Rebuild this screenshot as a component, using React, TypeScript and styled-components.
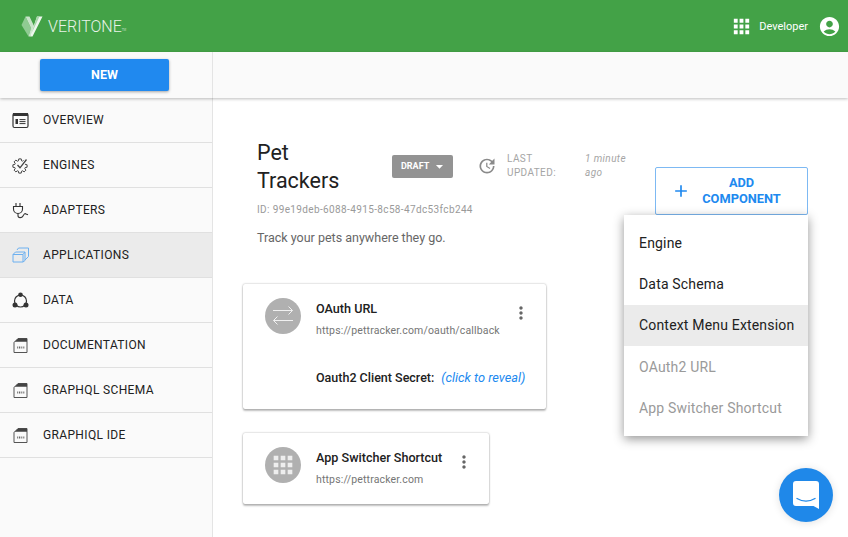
import styled, { createGlobalStyle } from "styled-components";
import { MdAccountCircle, MdAdd, MdApps, MdArrowDropDown, MdMoreVert, MdUpdate } from "react-icons/md";

const GlobalStyle = createGlobalStyle`
  html, body {
    margin: 0;
    height: 100%;
    overflow: hidden;
    background: #fff;
    font-family: Roboto, "Liberation Sans", sans-serif;
    color: #212121;
  }
`;

const Page = styled.div`
  position: relative;
  width: 848px;
  height: 537px;
  overflow: hidden;
`;

const TopBar = styled.header`
  display: flex;
  align-items: center;
  justify-content: space-between;
  height: 52px;
  padding: 0 7px 0 21px;
  background: #43a247;
  color: #fff;
`;

const Brand = styled.div`
  display: flex;
  align-items: center;
  gap: 5px;
  font-size: 16px;
  font-weight: 300;
  color: #e8f3e8;
`;

const Tm = styled.span`
  align-self: flex-end;
  margin: 0 0 5px -5px;
  font-size: 3px;
`;

const UserArea = styled.div`
  display: flex;
  align-items: center;
  font-size: 11px;
`;

const UserName = styled.span`
  margin: 0 10px 0 6px;
`;

const SubBar = styled.div`
  position: relative;
  z-index: 1;
  display: flex;
  height: 46px;
  background: #fafafa;
  box-shadow: 0 1px 3px rgba(0, 0, 0, 0.26);
`;

const SubBarLeft = styled.div`
  box-sizing: border-box;
  width: 213px;
  padding: 7px 0 0 40px;
  border-right: 1px solid #e4e4e4;
`;

const NewButton = styled.button`
  width: 129px;
  height: 32px;
  padding: 0 0 1px;
  border: 0;
  border-radius: 2px;
  background: #2089ef;
  color: #fff;
  font: 700 12.5px Roboto, sans-serif;
  box-shadow: 0 1px 3px rgba(0, 0, 0, 0.35);
`;

const Body = styled.div`
  display: flex;
  height: 439px;
`;

const Sidebar = styled.nav`
  box-sizing: border-box;
  flex: none;
  width: 213px;
  background: #fafafa;
  border-right: 1px solid #e4e4e4;
`;

const NavItem = styled.div<{ $active?: boolean }>`
  display: flex;
  align-items: center;
  box-sizing: border-box;
  height: 45px;
  padding-left: 12px;
  border-bottom: 1px solid #e0e0e0;
  background: ${(p) => (p.$active ? "#ebebeb" : "transparent")};
  font-size: 12px;
  letter-spacing: 0.35px;
  color: #212121;
`;

const NavIcon = styled.svg`
  flex: none;
  width: 17px;
  height: 17px;
  margin-right: 14px;
`;

const Main = styled.main`
  flex: 1;
  padding: 40px 40px 0 30px;
`;

const Head = styled.div`
  display: flex;
  align-items: flex-start;
  height: 146px;
`;

const HeadInfo = styled.div`
  width: 398px;
  padding-left: 14px;
`;

const TitleRow = styled.div`
  display: flex;
  align-items: center;
`;

const Title = styled.h1`
  width: 135px;
  margin: 1px 0 -1px;
  font-size: 21.5px;
  font-weight: 400;
  line-height: 28px;
  color: #212121;
`;

const DraftBadge = styled.div`
  display: flex;
  align-items: center;
  box-sizing: border-box;
  width: 61px;
  height: 23px;
  padding-left: 9px;
  border-radius: 2px;
  background: #939393;
  color: #fff;
  font-size: 9px;
  font-weight: 700;
`;

const DraftCaret = styled(MdArrowDropDown)`
  margin-left: 2px;
`;

const Updated = styled.div`
  display: flex;
  align-items: center;
  margin-left: 24px;
  color: #a5a5a5;
  font-size: 10px;
  line-height: 14px;
`;

const UpdatedLabel = styled.span`
  width: 78px;
  margin-left: 10px;
  letter-spacing: 0.4px;
`;

const UpdatedValue = styled.em`
  width: 48px;
  letter-spacing: 0.4px;
`;

const AppId = styled.div`
  margin-top: 10px;
  font-size: 10px;
  line-height: 12px;
  letter-spacing: 0.37px;
  color: #9a9a9a;
`;

const Description = styled.p`
  margin: 15px 0 0;
  font-size: 12.5px;
  line-height: 14px;
  color: #666;
`;

const AddButton = styled.button`
  display: flex;
  align-items: center;
  box-sizing: border-box;
  flex: none;
  width: 153px;
  height: 48px;
  margin-top: 29px;
  padding: 0 0 0 15px;
  border: 1px solid #7db9f3;
  border-radius: 2px;
  background: #fff;
  color: #2089ef;
  font: 700 12.8px/16px Roboto, sans-serif;
`;

const AddLabel = styled.span`
  flex: 1;
  padding-right: 15px;
  text-align: center;
`;

const Cards = styled.div`
  display: flex;
  flex-direction: column;
  align-items: flex-start;
  gap: 24px;
`;

const Card = styled.section<{ $width: number; $height: number }>`
  display: flex;
  align-items: flex-start;
  box-sizing: border-box;
  width: ${(p) => p.$width}px;
  height: ${(p) => p.$height}px;
  padding: 14px 16px 0 22px;
  border-radius: 2px;
  background: #fff;
  box-shadow: 0 0 2px rgba(0, 0, 0, 0.35), 0 2px 2px rgba(0, 0, 0, 0.24);
`;

const CircleIcon = styled.div`
  display: flex;
  align-items: center;
  justify-content: center;
  flex: none;
  width: 36px;
  height: 36px;
  margin-right: 15px;
  border-radius: 50%;
  background: #b0b0b0;
  color: #eee;
`;

const CardText = styled.div`
  flex: 1;
  min-width: 0;
`;

const CardTitle = styled.div`
  padding-top: 4px;
  font-size: 12.6px;
  font-weight: 500;
  line-height: 14px;
  color: #212121;
`;

const CardUrl = styled.div`
  margin-top: 9px;
  font-size: 10.5px;
  line-height: 12px;
  letter-spacing: 0.15px;
  color: #757575;
`;

const Secret = styled.div`
  margin-top: 34px;
  font-size: 12.5px;
  font-weight: 500;
  line-height: 14px;
  white-space: nowrap;
`;

const Reveal = styled.em`
  margin-left: 7px;
  font-size: 12.8px;
  font-weight: 400;
  color: #2089ef;
`;

const Kebab = styled(MdMoreVert)`
  flex: none;
  margin: 5px -1px 0 0;
  color: #666;
`;

const Menu = styled.div`
  position: absolute;
  top: 215px;
  left: 624px;
  z-index: 2;
  width: 184px;
  height: 221px;
  padding: 7.5px 0;
  box-sizing: border-box;
  background: #fff;
  box-shadow: 0 3px 10px rgba(0, 0, 0, 0.42);
`;

const MenuItem = styled.div<{ $disabled?: boolean; $hover?: boolean }>`
  display: flex;
  align-items: center;
  height: 41.2px;
  padding-left: 15px;
  font-size: 14px;
  letter-spacing: 0.18px;
  background: ${(p) => (p.$hover ? "#ebebeb" : "transparent")};
  color: ${(p) => (p.$disabled ? "#9a9a9a" : "#212121")};
`;

const ChatBubble = styled.div`
  position: absolute;
  top: 468px;
  left: 779px;
  z-index: 2;
  display: flex;
  align-items: center;
  justify-content: center;
  width: 54px;
  height: 54px;
  border-radius: 50%;
  background: #1f88e9;
  box-shadow: 0 1px 8px rgba(0, 0, 0, 0.12);
`;

// outline of an 8 tooth gear round (8, 9)
const gearPath = () => {
  const points: string[] = [];
  for (let i = 0; i < 8; i++) {
    const a = (i * Math.PI) / 4;
    [
      [-0.3, 5.4],
      [-0.17, 7.2],
      [0.17, 7.2],
      [0.3, 5.4],
    ].forEach(([offset, r]) => {
      const x = 8 + r * Math.cos(a + offset);
      const y = 9 + r * Math.sin(a + offset);
      points.push(`${x.toFixed(2)} ${y.toFixed(2)}`);
    });
  }
  return `M${points.join("L")}Z`;
};

const LogoMark = () => (
  <svg width="22" height="21" viewBox="0 0 22 21">
    <path d="M0.500 9 4.500 0.500 10 12 7.500 20.500Z" fill="#8fcb92" />
    <path d="M4.500 0.500H8.500L13.500 11 9 20.500 7.500 20.500 10 12Z" fill="#c9e4ca" />
    <path d="M16 0.500H21.500L11.500 20.500H9Z" fill="#eef7ee" />
    <path d="M16 0.500H18.500L10.500 17.500Z" fill="#a6d6a8" />
  </svg>
);

const OverviewGlyph = () => (
  <NavIcon viewBox="0 0 17 17" fill="none">
    <rect x="1" y="1.500" width="15" height="14" rx="1.500" stroke="#333" strokeWidth="1.200" />
    <rect x="1" y="1" width="15" height="3" fill="#333" />
    <rect x="3.500" y="7" width="2.500" height="5" fill="#333" />
    <path d="M7.500 7.600H13.500M7.500 9.600H13.500M7.500 11.600H13.500" stroke="#333" />
  </NavIcon>
);

const EnginesGlyph = () => (
  <NavIcon viewBox="0 0 17 17" fill="none" stroke="#444">
    <path d={gearPath()} strokeWidth="1" />
    <path d="M5.500 8 8 10.800 14.500 2.500" stroke="#fafafa" strokeWidth="3.400" />
    <path d="M5.500 8 8 10.800 14.500 2.500" strokeWidth="1.300" />
  </NavIcon>
);

const AdaptersGlyph = () => (
  <NavIcon viewBox="0 0 17 17" fill="none" stroke="#333" strokeWidth="1.100">
    <path d="M4 1v3.500M8 1v3.500M1.500 4.500h9V7a4.500 4.500 0 0 1-9 0z" />
    <path d="M6 11.500v2c0 3 4 2.500 5 .5s2-3 3-2l2 .8" />
  </NavIcon>
);

const ApplicationsGlyph = () => (
  <NavIcon viewBox="0 0 17 17" fill="none" stroke="#6cb0f0" strokeWidth="1">
    <path d="M1 7.500 3.500 5H13v8.500L11 15H1z" />
    <path d="M1 7.500H11V15M11 7.500 13 5" />
    <path d="M5 3 6.500 1H16.500v8.500L13 13" />
  </NavIcon>
);

const DataGlyph = () => (
  <NavIcon viewBox="0 0 17 17" fill="none">
    <circle cx="8.500" cy="9" r="6" stroke="#333" strokeWidth="1.200" />
    <circle cx="8.500" cy="2.800" r="2.300" fill="#333" />
    <circle cx="3" cy="13" r="2.500" fill="#333" />
    <circle cx="14" cy="13" r="2.500" fill="#333" />
  </NavIcon>
);

const DocGlyph = () => (
  <NavIcon viewBox="0 0 17 17" fill="none">
    <path d="M2 5.500 6 1.500H15V15.500H2z" stroke="#555" strokeWidth="1" />
    <path d="M2 5.500 6 1.500H15V4.800H2z" fill="#444" />
    <path d="M5 10.500H5.800M6.800 10.500H8.300M9.300 10.500H10.300M11.300 10.500H12.300" stroke="#666" strokeWidth="1.800" />
  </NavIcon>
);

const SwapGlyph = () => (
  <svg width="22" height="20" viewBox="0 0 22 20" fill="none" stroke="#f0f0f0" strokeWidth="1">
    <path d="M1 4.500H20.500M16.500 0.500l4 4-4 4" />
    <path d="M21 14.500H1.500M5.500 10.500l-4 4 4 4" />
  </svg>
);

const navItems = [
  { label: "OVERVIEW", icon: <OverviewGlyph /> },
  { label: "ENGINES", icon: <EnginesGlyph /> },
  { label: "ADAPTERS", icon: <AdaptersGlyph /> },
  { label: "APPLICATIONS", icon: <ApplicationsGlyph />, active: true },
  { label: "DATA", icon: <DataGlyph /> },
  { label: "DOCUMENTATION", icon: <DocGlyph /> },
  { label: "GRAPHQL SCHEMA", icon: <DocGlyph /> },
  { label: "GRAPHIQL IDE", icon: <DocGlyph /> },
];

const App = () => (
  <Page>
    <GlobalStyle />
    <TopBar>
      <Brand>
        <LogoMark />
        VERITONE
        <Tm>TM</Tm>
      </Brand>
      <UserArea>
        <MdApps size={23} />
        <UserName>Developer</UserName>
        <MdAccountCircle size={23} />
      </UserArea>
    </TopBar>
    <SubBar>
      <SubBarLeft>
        <NewButton>NEW</NewButton>
      </SubBarLeft>
    </SubBar>
    <Body>
      <Sidebar>
        {navItems.map((item) => (
          <NavItem key={item.label} $active={item.active}>
            {item.icon}
            {item.label}
          </NavItem>
        ))}
      </Sidebar>
      <Main>
        <Head>
          <HeadInfo>
            <TitleRow>
              <Title>
                Pet
                <br />
                Trackers
              </Title>
              <DraftBadge>
                DRAFT
                <DraftCaret size={17} />
              </DraftBadge>
              <Updated>
                <MdUpdate size={20} color="#8a8a8a" />
                <UpdatedLabel>
                  LAST
                  <br />
                  UPDATED:
                </UpdatedLabel>
                <UpdatedValue>1 minute ago</UpdatedValue>
              </Updated>
            </TitleRow>
            <AppId>ID: 99e19deb-6088-4915-8c58-47dc53fcb244</AppId>
            <Description>Track your pets anywhere they go.</Description>
          </HeadInfo>
          <AddButton>
            <MdAdd size={20} />
            <AddLabel>
              ADD
              <br />
              COMPONENT
            </AddLabel>
          </AddButton>
        </Head>
        <Cards>
          <Card $width={303} $height={125}>
            <CircleIcon>
              <SwapGlyph />
            </CircleIcon>
            <CardText>
              <CardTitle>OAuth URL</CardTitle>
              <CardUrl>https://pettracker.com/oauth/callback</CardUrl>
              <Secret>
                Oauth2 Client Secret:
                <Reveal>(click to reveal)</Reveal>
              </Secret>
            </CardText>
            <Kebab size={20} />
          </Card>
          <Card $width={246} $height={71}>
            <CircleIcon>
              <MdApps size={28} />
            </CircleIcon>
            <CardText>
              <CardTitle>App Switcher Shortcut</CardTitle>
              <CardUrl>https://pettracker.com</CardUrl>
            </CardText>
            <Kebab size={20} />
          </Card>
        </Cards>
      </Main>
    </Body>
    <Menu>
      <MenuItem>Engine</MenuItem>
      <MenuItem>Data Schema</MenuItem>
      <MenuItem $hover>Context Menu Extension</MenuItem>
      <MenuItem $disabled>OAuth2 URL</MenuItem>
      <MenuItem $disabled>App Switcher Shortcut</MenuItem>
    </Menu>
    <ChatBubble>
      <svg width="26" height="28" viewBox="0 0 26 28">
        <path d="M3 0H23a3 3 0 0 1 3 3V28L20.500 25H3a3 3 0 0 1-3-3V3a3 3 0 0 1 3-3Z" fill="#fff" />
        <path d="M4 17.500C10 21 16 21 22 17.500" fill="none" stroke="#1f88e9" strokeWidth="1.400" strokeLinecap="round" />
      </svg>
    </ChatBubble>
  </Page>
);

export default App;
